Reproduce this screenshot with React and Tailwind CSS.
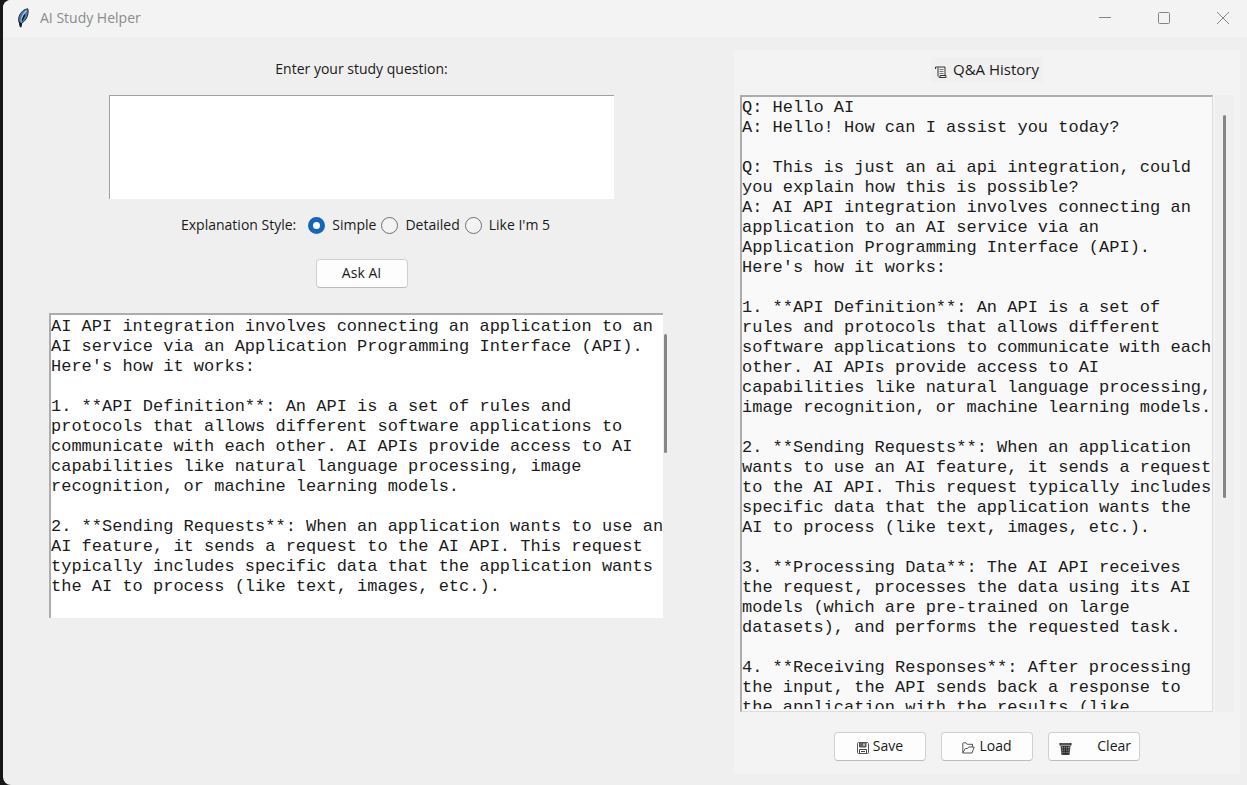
import { useState } from "react";

const ANSWER = `AI API integration involves connecting an application to an
AI service via an Application Programming Interface (API).
Here's how it works:

1. **API Definition**: An API is a set of rules and
protocols that allows different software applications to
communicate with each other. AI APIs provide access to AI
capabilities like natural language processing, image
recognition, or machine learning models.

2. **Sending Requests**: When an application wants to use an
AI feature, it sends a request to the AI API. This request
typically includes specific data that the application wants
the AI to process (like text, images, etc.).
`;

const HISTORY = `Q: Hello AI
A: Hello! How can I assist you today?

Q: This is just an ai api integration, could
you explain how this is possible?
A: AI API integration involves connecting an
application to an AI service via an
Application Programming Interface (API).
Here's how it works:

1. **API Definition**: An API is a set of
rules and protocols that allows different
software applications to communicate with each
other. AI APIs provide access to AI
capabilities like natural language processing,
image recognition, or machine learning models.

2. **Sending Requests**: When an application
wants to use an AI feature, it sends a request
to the AI API. This request typically includes
specific data that the application wants the
AI to process (like text, images, etc.).

3. **Processing Data**: The AI API receives
the request, processes the data using its AI
models (which are pre-trained on large
datasets), and performs the requested task.

4. **Receiving Responses**: After processing
the input, the API sends back a response to
the application with the results (like`;

const STYLES = ["Simple", "Detailed", "Like I'm 5"];

function FeatherIcon() {
  return (
    <svg className="h-5 w-3" viewBox="0 0 12 20" fill="none" aria-hidden="true">
      <path d="M10.8.8C7 1.2 3.6 4.2 2.2 8.2c-.9 2.600-.8 5 .2 6.600L3.600 19l.8-3.700C8 13.400 10.500 9.500 11 5.500c.2-1.800.3-3.400-.2-4.700Z" fill="#4779ae" stroke="#2b3038" strokeWidth="1" />
      <path d="M9.500 2.500C6.500 5.500 4.300 9.500 3.700 15" stroke="#a7c9ea" strokeWidth="1.200" />
      <path d="M7.800 6.500 5 12.500M2.600 13.500l1 5.500.9-4" stroke="#16191d" strokeWidth="1.500" />
    </svg>
  );
}

function ScrollIcon() {
  return (
    <svg className="h-3 w-3" viewBox="0 0 12 12" fill="none" stroke="#333" aria-hidden="true">
      <path d="M.5 3V1h9.500v8M3 1.500V10.500" />
      <path d="M4.500 11.500h6.500V9.500H5v1.500c0 .5-1 .5-1.500 0" />
      <path d="M4.500 3.500h4M4.500 5.500h4M4.500 7.500h4" stroke="#777" />
    </svg>
  );
}

function SaveIcon() {
  return (
    <svg className="h-3 w-3" viewBox="0 0 12 12" fill="none" stroke="#555" aria-hidden="true">
      <path d="M.5 1.500q0-1 1-1h9l1 1v9q0 1-1 1h-9q-1 0-1-1Z" />
      <path d="M2.500 1h6.500v4H2.500Z" fill="#666" />
      <path d="M7 1.500v2.500" stroke="#fff" />
      <path d="M2.500 11.500v-4h7v4M4 9.500h4" stroke="#444" />
    </svg>
  );
}

function FolderIcon() {
  return (
    <svg className="h-3 w-[13px]" viewBox="0 0 13 12" fill="none" stroke="#555" aria-hidden="true">
      <path d="M.8 10.800V1.500q0-.7.7-.7h2.500l1.200 1.500h5.300v2.500" />
      <path d="m.8 11 2.400-4.500h2.300l1.200-1.500h5.500l-2.200 6Z" strokeLinejoin="round" />
    </svg>
  );
}

function TrashIcon() {
  return (
    <svg className="h-[13px] w-[13px]" viewBox="0 0 13 13" fill="none" aria-hidden="true">
      <path d="M.5 1h12v2.500H.5Z" fill="#333" />
      <path d="M1.500 4h10l-1 9h-8Z" fill="#444" />
      <path d="M3 5.500h7.500M3 8h7M3.500 10.500h6" stroke="#aaa" strokeWidth=".8" />
      <path d="m4.500 4 .5 8.500M6.500 4v8.500M8.500 4 8 12.500" stroke="#222" strokeWidth=".8" />
      <path d="M2 2h9" stroke="#888" strokeWidth=".8" />
    </svg>
  );
}

function Button({ children, className = "justify-center" }) {
  return (
    <button
      type="button"
      className={`flex h-[29px] w-[92px] items-center whitespace-pre rounded-[4px] border border-[#d0d0d0] border-b-[#bcbcbc] bg-[#fdfdfd] pb-px ${className}`}
    >
      {children}
    </button>
  );
}

function TextPane({ className, ...props }) {
  return (
    <div className={`flex border-t-2 border-l-2 border-t-[#adadad] border-l-[#adadad] pb-[2px] ${className}`}>
      <textarea
        readOnly
        className="block min-w-0 flex-1 resize-none overflow-hidden whitespace-pre font-['Liberation_Mono',monospace] text-[17px] leading-5 text-[#1c1c1c] outline-none"
        {...props}
      />
    </div>
  );
}

function TitleBar() {
  return (
    <header className="flex h-[37px] items-center bg-[#f3f3f3] pr-[17px] pb-px pl-[14px]">
      <FeatherIcon />
      <h1 className="ml-[11px] flex-1 text-sm text-[#8b8b8b]">AI Study Helper</h1>
      <div className="flex gap-[45px] text-[#858585]">
        <button type="button" aria-label="Minimize">
          <svg className="h-[14px] w-[14px]" viewBox="0 0 14 14" stroke="currentColor"><path d="M1 6.500h12" /></svg>
        </button>
        <button type="button" aria-label="Maximize">
          <svg className="h-[14px] w-[14px]" viewBox="0 0 14 14" fill="none" stroke="currentColor"><rect x="1.500" y="1.500" width="11" height="11" rx="1" /></svg>
        </button>
        <button type="button" aria-label="Close">
          <svg className="h-[14px] w-[14px]" viewBox="0 0 14 14" stroke="currentColor"><path d="m1 1 12 12M13 1 1 13" /></svg>
        </button>
      </div>
    </header>
  );
}

export default function App() {
  const [style, setStyle] = useState("Simple");
  const [question, setQuestion] = useState("");

  return (
    <div className="flex min-h-screen flex-col bg-[#171717] pl-[3px] font-['Open_Sans',sans-serif] text-sm text-[#1a1a1a]">
      <div className="flex flex-1 flex-col overflow-hidden rounded-l-lg bg-[#efefef]">
        <TitleBar />
        <main className="flex flex-1 gap-[14px] pt-[13px] pr-[7px] pb-[11px]">
          <section className="flex min-w-0 flex-1 flex-col items-center pt-[9px]">
            <label htmlFor="question" className="leading-5">Enter your study question:</label>
            <textarea
              id="question"
              value={question}
              onChange={(e) => setQuestion(e.target.value)}
              className="mt-4 block h-[104px] w-[505px] resize-none border-t border-l border-[#a0a0a0] bg-white outline-none"
            />
            <fieldset className="mt-4 flex h-5 items-center pl-2">
              <legend className="float-left mr-3 leading-5">Explanation Style:</legend>
              {STYLES.map((name) => (
                <label key={name} className="mr-[5px] flex items-center gap-[7px] last:mr-0">
                  <input
                    type="radio"
                    name="style"
                    checked={style === name}
                    onChange={() => setStyle(name)}
                    className="h-[17px] w-[17px] appearance-none rounded-full border border-[#707070] bg-[#f3f3f3] checked:border-[5px] checked:border-[#1167b8] checked:bg-white"
                  />
                  {name}
                </label>
              ))}
            </fieldset>
            <div className="mt-6">
              <Button>Ask AI</Button>
            </div>
            <div className="mt-[25px] flex h-[305px]">
              <TextPane aria-label="Answer" value={ANSWER} className="w-[614px] bg-white pt-[2px]" />
              <div className="flex w-[11px] justify-end pt-[21px] pr-[7px]">
                <div className="h-[119px] w-[3px] rounded-full bg-[#868686]" />
              </div>
            </div>
          </section>

          <section className="flex w-[506px] flex-col items-center bg-[#f3f3f3] px-[6px] pt-[7px] pb-[13px]">
            <label htmlFor="history" className="flex h-[25px] items-center gap-[6px] bg-[#f0f0f0] px-1 text-[15px]">
              <span className="pt-1"><ScrollIcon /></span>
              Q&amp;A History
            </label>
            <div className="mt-[13px] flex w-full flex-1">
              <TextPane
                id="history"
                value={HISTORY}
                className="min-w-0 flex-1 border-r border-b border-r-[#dcdcdc] border-b-[#dcdcdc] bg-[#f9f9f9] pt-px"
              />
              <div className="ml-[2px] flex w-[19px] justify-center bg-[#efefef] pt-5">
                <div className="h-[383px] w-[3px] rounded-full bg-[#868686]" />
              </div>
            </div>
            <div className="mt-5 flex gap-[15px]">
              <Button className="justify-center gap-1"><span className="pt-1"><SaveIcon /></span>Save</Button>
              <Button className="justify-center gap-1"><span className="pt-1"><FolderIcon /></span>Load</Button>
              <Button className="justify-between pr-2 pl-[10px]"><span className="pt-1"><TrashIcon /></span>Clear</Button>
            </div>
          </section>
        </main>
      </div>
    </div>
  );
}
